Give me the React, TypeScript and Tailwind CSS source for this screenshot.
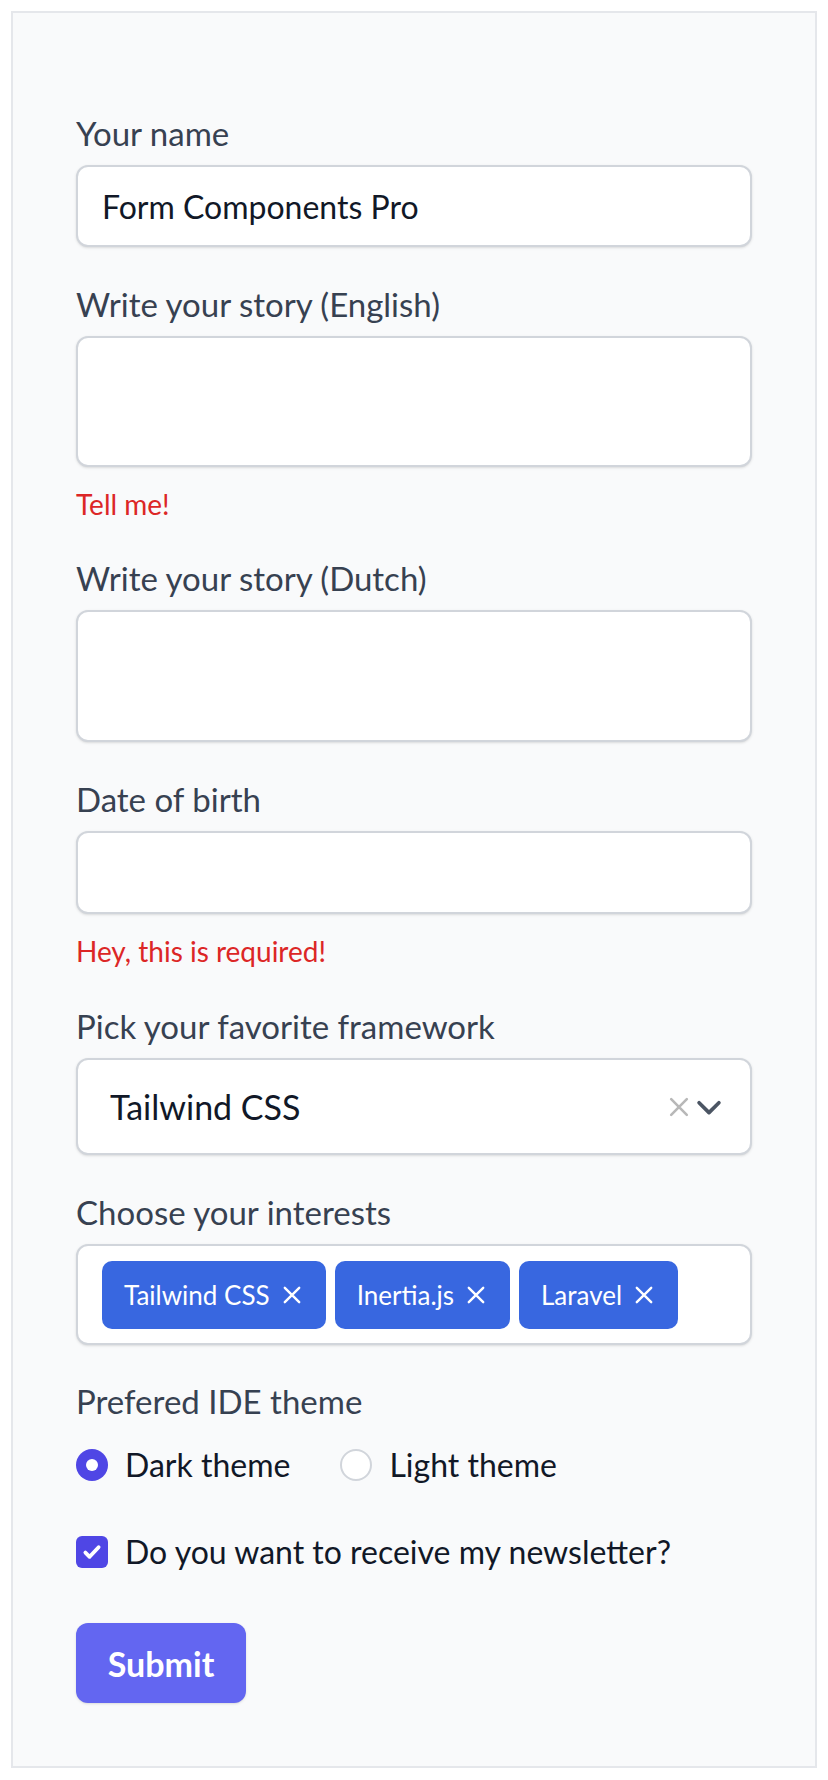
import React, { useState } from 'react';

const labelCls = 'block text-[33px] leading-[40px] text-[#374151] mb-[12px]';
const boxCls = 'w-full bg-white border-2 border-[#d1d5db] rounded-[12px] shadow-sm';
const errorCls = 'mt-[20px] text-[28px] leading-[34px] text-[#dc2626]';

function XIcon({ className }: { className?: string }) {
  return (
    <svg viewBox="0 0 20 20" className={className} fill="none" stroke="currentColor" strokeWidth={2} strokeLinecap="round">
      <path d="M4 4l12 12M16 4L4 16" />
    </svg>
  );
}

export default function App() {
  const [name, setName] = useState('Form Components Pro');
  const [theme, setTheme] = useState('dark');
  const [newsletter, setNewsletter] = useState(true);
  const [tags, setTags] = useState(['Tailwind CSS', 'Inertia.js', 'Laravel']);

  return (
    <div className="min-h-screen bg-white p-[11px] font-['Lato',sans-serif]">
      <div className="bg-[#f9fafb] border-2 border-[#e5e7eb] px-[63px] pt-[100px] pb-[63px]">
        <form className="flex flex-col" onSubmit={e => e.preventDefault()}>
          {/* Name */}
          <div>
            <label className={labelCls}>Your name</label>
            <input
              value={name}
              onChange={e => setName(e.target.value)}
              className={`${boxCls} h-[82px] px-[24px] text-[32px] text-[#111827] outline-none`}
            />
          </div>

          {/* Story EN */}
          <div className="mt-[37px]">
            <label className={labelCls}>Write your story (English)</label>
            <textarea className={`${boxCls} h-[131px] block resize-none outline-none`} />
            <p className={errorCls}>Tell me!</p>
          </div>

          {/* Story NL */}
          <div className="mt-[37px]">
            <label className={labelCls}>Write your story (Dutch)</label>
            <textarea className={`${boxCls} h-[132px] block resize-none outline-none`} />
          </div>

          {/* Date of birth */}
          <div className="mt-[37px]">
            <label className={labelCls}>Date of birth</label>
            <input className={`${boxCls} h-[83px] px-[24px] outline-none`} />
            <p className={errorCls}>Hey, this is required!</p>
          </div>

          {/* Framework */}
          <div className="mt-[38px]">
            <label className={labelCls}>Pick your favorite framework</label>
            <div className={`${boxCls} h-[97px] flex items-center pl-[32px] pr-[24px]`}>
              <span className="flex-1 text-[34px] text-[#111827]">Tailwind CSS</span>
              <XIcon className="w-[26px] h-[26px] text-[#b8b8b8]" />
              <svg viewBox="0 0 24 24" className="w-[34px] h-[34px] text-[#4b5563]" fill="none" stroke="currentColor" strokeWidth={2.6} strokeLinecap="round" strokeLinejoin="round">
                <path d="M5 9l7 7 7-7" />
              </svg>
            </div>
          </div>

          {/* Interests */}
          <div className="mt-[37px]">
            <label className={labelCls}>Choose your interests</label>
            <div className={`${boxCls} flex flex-wrap gap-[9px] pl-[24px] pr-[16px] pt-[15px] pb-[14px]`}>
              {tags.map(t => (
                <span key={t} className="h-[68px] flex items-center gap-[10px] pl-[22px] pr-[22px] rounded-[10px] bg-[#3867e0] text-white text-[26px]">
                  {t}
                  <button type="button" onClick={() => setTags(tags.filter(x => x !== t))}>
                    <XIcon className="w-[24px] h-[24px] text-white" />
                  </button>
                </span>
              ))}
            </div>
          </div>

          {/* Theme */}
          <div className="mt-[36px]">
            <label className={`${labelCls} !mb-0`}>Prefered IDE theme</label>
            <div className="flex items-center mt-[24px] h-[40px]">
              <label className="flex items-center gap-[17px] cursor-pointer" onClick={() => setTheme('dark')}>
                <span className={`w-[32px] h-[32px] rounded-full flex items-center justify-center ${theme === 'dark' ? 'bg-[#4f46e5]' : 'bg-white border-2 border-[#d1d5db]'}`}>
                  {theme === 'dark' && <span className="w-[12px] h-[12px] rounded-full bg-white" />}
                </span>
                <span className="text-[32px] text-[#111827]">Dark theme</span>
              </label>
              <label className="flex items-center gap-[17px] ml-[50px] cursor-pointer" onClick={() => setTheme('light')}>
                <span className={`w-[32px] h-[32px] rounded-full flex items-center justify-center ${theme === 'light' ? 'bg-[#4f46e5]' : 'bg-white border-2 border-[#d1d5db]'}`}>
                  {theme === 'light' && <span className="w-[12px] h-[12px] rounded-full bg-white" />}
                </span>
                <span className="text-[32px] text-[#111827]">Light theme</span>
              </label>
            </div>
          </div>

          {/* Newsletter */}
          <label className="flex items-center gap-[17px] mt-[47px] h-[40px] cursor-pointer" onClick={() => setNewsletter(!newsletter)}>
            <span className={`w-[32px] h-[32px] rounded-[6px] flex items-center justify-center ${newsletter ? 'bg-[#4f46e5]' : 'bg-white border-2 border-[#d1d5db]'}`}>
              {newsletter && (
                <svg viewBox="0 0 20 20" className="w-[24px] h-[24px] text-white" fill="none" stroke="currentColor" strokeWidth={3.2} strokeLinecap="round" strokeLinejoin="round">
                  <path d="M4.5 10.5l3.5 3.5L15.5 6" />
                </svg>
              )}
            </span>
            <span className="text-[32px] text-[#111827]">Do you want to receive my newsletter?</span>
          </label>

          {/* Submit */}
          <div className="mt-[51px]">
            <button type="submit" className="h-[80px] w-[170px] rounded-[12px] bg-[#6366f1] text-white text-[34px] font-bold shadow-sm">
              Submit
            </button>
          </div>
        </form>
      </div>
    </div>
  );
}
